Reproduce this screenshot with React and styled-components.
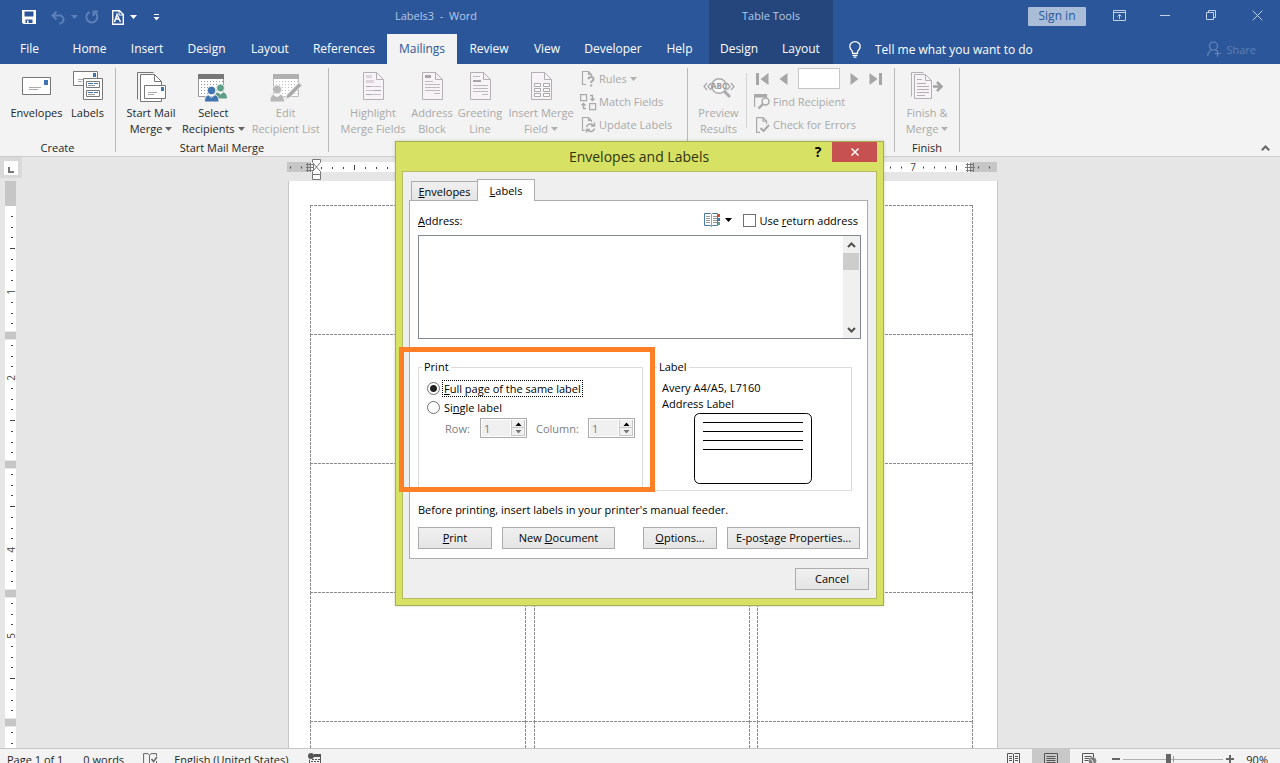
import React from "react";
import styled, { createGlobalStyle, css } from "styled-components";

const GlobalStyle = createGlobalStyle`
  * {
    box-sizing: border-box;
  }
  body {
    margin: 0;
    font-family: "Open Sans", "Noto Sans", sans-serif;
    font-size: 11px;
    color: #262626;
    overflow: hidden;
  }
  button, input, textarea {
    font: inherit;
    color: inherit;
    margin: 0;
  }
  svg {
    display: block;
    flex: none;
    overflow: visible;
  }
`;

/* ---------- icons ---------- */

const Caret = ({ color = "currentColor" }) => (
  <svg width="7" height="4" viewBox="0 0 7 4">
    <path d="M0 0h7L3.500 4z" fill={color} />
  </svg>
);

const SaveIcon = () => (
  <svg width="14" height="14" viewBox="0 0 14 14">
    <path d="M0 0h14v14H1.500L0 12.500z" fill="#fff" />
    <path d="M2.500 1.500h9v5h-9zM3.500 9.500h7V13h-4v-2.500h-1.500V13H3.500z" fill="#2b579a" />
  </svg>
);

const UndoIcon = () => (
  <svg width="14" height="13" viewBox="0 0 14 13" fill="none" stroke="#5d80b9" strokeWidth="2">
    <path d="M5.500.500L1.500 4.500l4 4M1.500 4.500h7a4 4 0 0 1 0 8" />
  </svg>
);

const RedoIcon = () => (
  <svg width="14" height="14" viewBox="0 0 14 14" fill="none" stroke="#5d80b9" strokeWidth="2">
    <path d="M4.500 2A5.500 5.500 0 1 0 10 2.500M8.500 6V1.500H13" />
  </svg>
);

const DocStyleIcon = () => (
  <svg width="12" height="15" viewBox="0 0 12 15" fill="none" stroke="#fff">
    <path d="M.7.700h6.800l3.800 3.800v9.800H.7z" strokeWidth="1.400" />
    <path d="M7 1v4h4" />
    <path d="M2.500 12L5 4.500 8.500 12M3.500 9h4" strokeWidth="1.500" />
  </svg>
);

const MoreIcon = () => (
  <svg width="7" height="7" viewBox="0 0 7 7" fill="#fff">
    <path d="M1 0h5v1H1zM.5 3h6L3.500 6.500z" />
  </svg>
);

const RibbonOptionsIcon = () => (
  <svg width="13" height="11" viewBox="0 0 13 11" fill="none" stroke="#c3d1e6">
    <path d="M.5.500h12v10H.5zM.5 2.500h12M6.500 9V4.500M4.500 6.500l2-2 2 2" />
  </svg>
);

const MinimizeIcon = () => (
  <svg width="10" height="11" viewBox="0 0 10 11" stroke="#c3d1e6">
    <path d="M0 5.500h10" />
  </svg>
);

const RestoreIcon = () => (
  <svg width="11" height="11" viewBox="0 0 11 11" fill="none" stroke="#c3d1e6">
    <path d="M.5 2.500h7v7h-7zM2.500 2.500v-2h7v7h-2" />
  </svg>
);

const CloseIcon = ({ size = 11, color = "#c3d1e6", weight = 1 }) => (
  <svg width={size} height={size} viewBox="0 0 11 11" stroke={color} strokeWidth={weight}>
    <path d="M.7.700l9.600 9.600M10.300.700L.7 10.300" />
  </svg>
);

const BulbIcon = () => (
  <svg width="12" height="17" viewBox="0 0 12 17" fill="none" stroke="#fff" strokeWidth="1.300">
    <path d="M3.500 12.300V10.500C2.500 9 .8 7.800.8 5.400a5.200 4.800 0 0 1 10.400 0C11.200 7.800 9.500 9 8.500 10.500v1.800zM3.500 14.300h5M4.500 16.200h3" />
  </svg>
);

const ShareIcon = () => (
  <svg width="15" height="16" viewBox="0 0 15 16" fill="none" stroke="#6485ba" strokeWidth="1.200">
    <circle cx="6.500" cy="5" r="4" />
    <path d="M.7 15c0-3 1.500-4.800 4-6M8 8.800l2 1M10.500 9.500v6M7.500 12.500h6.500" />
  </svg>
);

const EnvelopeIcon = () => (
  <svg width="30" height="30" viewBox="1 0 30 30">
    <path d="M1.500 5.500h28v17h-28z" fill="#fff" stroke="#777" />
    <path d="M23 8h4v5h-4z" fill="#3f75b0" />
    <path d="M8 15.500h12M8 17.500h9" stroke="#aaa" fill="none" />
  </svg>
);

const LabelsIcon = () => (
  <svg width="30" height="30" viewBox="0 0 30 30">
    <path d="M.5-.500h24v14H.5z" fill="#fff" stroke="#777" />
    <path d="M20 1h3v4h-3z" fill="#3f75b0" />
    <path d="M5 7.500h5M5 9.500h4" stroke="#aaa" />
    <path d="M10.500 6.500h19v21h-19z" fill="#fff" stroke="#777" />
    <path d="M13.500 9.500h13v6h-13zM13.500 18.500h13v6h-13z" fill="#fff" stroke="#777" />
    <path d="M15 11.500h5M21 11.500h4M15 20.500h5M21 20.500h4" stroke="#3f75b0" />
    <path d="M15 13.500h7M15 22.500h7" stroke="#999" />
  </svg>
);

const MailMergeIcon = () => (
  <svg width="30" height="30" viewBox="0 0 30 30">
    <path d="M1.500 27.500V.500h16" fill="none" stroke="#777" />
    <path d="M4.500 2.500h14l7 7v20h-21z" fill="#fff" stroke="#777" />
    <path d="M18.500 2.500v7h7" fill="none" stroke="#777" />
    <path d="M8.500 13.500h21v13h-21z" fill="#fff" stroke="#777" />
    <path d="M25 15h3v4h-3z" fill="#3f75b0" />
    <path d="M12 20.500h9M12 22.500h6" stroke="#aaa" />
  </svg>
);

const dots = [];
for (let y = 8; y < 24; y += 3) {
  for (let x = 3; x < 25; x += 3) dots.push([x, y]);
}

const ListSheet = ({ head, line }) => (
  <>
    <path d="M.5 2.500h25v22H.5z" fill="#fff" stroke={line} />
    <path d="M0 2h26v5H0z" fill={head} />
    {dots.map(([x, y]) => (
      <rect key={`${x}-${y}`} x={x} y={y + 1} width="1" height="1" fill={line} />
    ))}
  </>
);

const SelectRecipientsIcon = () => (
  <svg width="30" height="30" viewBox="0 0 30 30">
    <ListSheet head="#777" line="#999" />
    <g stroke="#f3f3f3" strokeWidth="1">
      <circle cx="22.500" cy="16" r="4" fill="#5f9f88" />
      <path d="M16 27c0-5 2-7 4-7l2.500 2 2.500-2c2 0 4.500 2 4.500 7z" fill="#5f9f88" />
      <circle cx="13.500" cy="18.500" r="4.300" fill="#3f75b0" />
      <path d="M6.500 30c0-5 2-7 4-7l3 2.500 3-2.500c2.500 0 4.500 2 4.500 7z" fill="#3f75b0" />
    </g>
  </svg>
);

const EditRecipientsIcon = () => (
  <svg width="32" height="30" viewBox="-3 0 32 30">
    <ListSheet head="#b0b0b0" line="#bdbdbd" />
    <g stroke="#f3f3f3" strokeWidth="1" fill="#b7b7b7">
      <circle cx="4" cy="17.500" r="4.500" />
      <path d="M-3 30c0-5 1.500-7 3.500-7.500L4 25l3.500-2.500C10 23 11.500 25 11.500 30z" />
      <path d="M12.500 27.500l1.500-5L26 10.500l3 3L17 25.500z" fill="#a9a9a9" />
    </g>
  </svg>
);

const faded = "#b3b0b3";

const DocShape = () => (
  <>
    <path d="M.5.500h13l7 7v20H.5z" fill="#f7f3f7" stroke={faded} />
    <path d="M13.500.500v7h7" fill="none" stroke={faded} />
  </>
);

const HighlightIcon = () => (
  <svg width="21" height="28" viewBox="0 0 21 28">
    <DocShape />
    <path d="M3 3h6v3H3zM3 8h8v3H3z" fill="#dcd6dc" />
    <path d="M3 14.500h15M3 18.500h15M3 22.500h15" stroke="#c9bdc9" />
    <path d="M3 14.500h5M11 18.500h7M3 22.500h5" stroke="#aaa" />
  </svg>
);

const AddressIcon = () => (
  <svg width="21" height="28" viewBox="0 0 21 28">
    <DocShape />
    <path d="M3 3h6v3H3z" fill="#a6a6a6" />
    <path d="M3 9.500h8M3 12.500h15M3 15.500h15M3 18.500h15M12 21.500h6" stroke="#bbb" />
  </svg>
);

const GreetingIcon = () => (
  <svg width="21" height="28" viewBox="0 0 21 28">
    <DocShape />
    <path d="M3 8h8v2H3z" fill="#a6a6a6" />
    <path d="M3 4.500h7M3 13.500h15M3 16.500h15M3 19.500h15M12 22.500h6" stroke="#bbb" />
  </svg>
);

const MergeFieldIcon = () => (
  <svg width="21" height="28" viewBox="0 0 21 28">
    <DocShape />
    <path
      d="M3.500 11.500h6v3h-6zM12.500 11.500h6v3h-6zM3.500 16.500h6v3h-6zM12.500 16.500h6v3h-6zM3.500 21.500h6v3h-6zM12.500 21.500h6v3h-6z"
      fill="#fff"
      stroke="#aaa"
    />
  </svg>
);

const RulesIcon = () => (
  <svg width="16" height="16" viewBox="0 0 16 16" fill="none" stroke="#a9a9a9">
    <path d="M6 13.500H2.500V.500h6l3 3V5M8.500.500v3h3" strokeWidth="1.200" />
    <path d="M8.500 8.200c0-3 5-3 5-.2 0 2-2.500 2-2.500 4" strokeWidth="2" />
    <path d="M10 13.500h2.200v2H10z" fill="#a9a9a9" stroke="none" />
  </svg>
);

const MatchIcon = () => (
  <svg width="16" height="16" viewBox="0 0 16 16" fill="none" stroke="#a9a9a9">
    <path d="M.6.600h6v6h-6zM9.600 9.600h6v6h-6z" strokeWidth="1.200" />
    <path d="M10 1.500h2.500V6M10.500 4.500l2 2 2-2M6 14.500H3.500V10M1.500 11.500l2-2 2 2" strokeWidth="1.400" />
  </svg>
);

const UpdateIcon = () => (
  <svg width="16" height="16" viewBox="0 0 16 16" fill="none" stroke="#a9a9a9">
    <path d="M5 13.500H2.500V.500h6l3 3V5M8.500.500v3h3" strokeWidth="1.200" />
    <path d="M6.500 10a4 4 0 0 1 7-1.500M14.500 5.500v3.500H11M14.500 11.500a4 4 0 0 1-7 1.500M6.500 15.500V12.500H10" strokeWidth="1.500" />
  </svg>
);

const PreviewIcon = () => (
  <svg width="32" height="24" viewBox="0 0 32 24" fill="none" stroke="#ababab">
    <path d="M4 6L1 9.500 4 13M8 6L5 9.500 8 13M24 6l3 3.500-3 3.500M28 6l3 3.500-3 3.500" strokeWidth="1.300" />
    <circle cx="16" cy="9" r="7.300" strokeWidth="1.500" fill="#f8f8f8" />
    <path d="M21 14l6 6" strokeWidth="3" />
    <text x="16" y="12" fontSize="8" fontWeight="700" textAnchor="middle" fill="#999" stroke="none">ABC</text>
  </svg>
);

const FindIcon = () => (
  <svg width="16" height="16" viewBox="0 0 16 16" fill="none" stroke="#a9a9a9">
    <path d="M.6 13V1h12v2" strokeWidth="1.200" />
    <path d="M0 0h13v3.500H0z" fill="#a9a9a9" stroke="none" />
    <circle cx="11.500" cy="7.500" r="3.500" strokeWidth="1.500" fill="#f3f3f3" />
    <path d="M9 10l-4.500 4.500" strokeWidth="2.400" />
  </svg>
);

const CheckIcon = () => (
  <svg width="16" height="16" viewBox="0 0 16 16" fill="none" stroke="#a9a9a9">
    <path d="M6 15.400H2.600V.600h6.500l3.500 3.500V7M9 .600v3.500h3.500" strokeWidth="1.200" />
    <path d="M6.500 11l3 3 5.500-6" strokeWidth="2" />
  </svg>
);

const FinishIcon = () => (
  <svg width="32" height="28" viewBox="0 0 32 28">
    <path d="M.5 24.500V.500h12" fill="none" stroke={faded} />
    <g transform="translate(3 2)">
      <path d="M.5.500h11l6 6v18H.5z" fill="#f7f3f7" stroke={faded} />
      <path d="M11.500.500v6h6M3 5.500h5M3 9.500h9M3 12.500h12M3 15.500h12M3 18.500h12M3 21.500h8" fill="none" stroke={faded} />
    </g>
    <path d="M22 14.500h8M26 10l4.500 4.500L26 19" fill="none" stroke="#a3a3a3" strokeWidth="2.500" />
  </svg>
);

const NavIcon = ({ bar, flip }) => (
  <svg width={bar ? 13 : 9} height="12" viewBox={bar ? "0 0 13 12" : "4 0 9 12"} fill="#a6a6a6">
    <g transform={flip ? (bar ? "translate(13 0) scale(-1 1)" : "translate(17 0) scale(-1 1)") : undefined}>
      {bar && <path d="M0 0h3v12H0z" />}
      <path d="M12.500 0v12L4.500 6z" />
    </g>
  </svg>
);

const CollapseIcon = () => (
  <svg width="9" height="6" viewBox="0 0 9 6" fill="none" stroke="#666" strokeWidth="2">
    <path d="M.8 5.200l3.700-3.700 3.700 3.700" />
  </svg>
);

const ProofIcon = () => (
  <svg width="15" height="13" viewBox="0 0 15 13" fill="none" stroke="#666">
    <path d="M6.500 12V2.500L5 .600H.6v10H5l1.500 1.500L8 10.600M6.500 2.500L8 .600h5.500V3M13.500 8v2.600H11" />
    <path d="M8.500 6l2 2.500L14 4" strokeWidth="1.500" />
  </svg>
);

const MacroIcon = () => (
  <svg width="14" height="12" viewBox="0 0 14 12">
    <path d="M6 1h7v3H6z" fill="#555" />
    <path d="M1.500 6.500v5h11V4" fill="none" stroke="#555" />
    <path d="M4 6.500h8M3 8.500h9M3 10.500h9" stroke="#555" strokeDasharray="2 1" />
    <circle cx="3" cy="3" r="3" fill="#555" />
  </svg>
);

const ReadIcon = () => (
  <svg width="13" height="12" viewBox="0 0 13 12" fill="none" stroke="#555">
    <path d="M.5.500h5l1 1 1-1h5v10h-5l-1 1-1-1h-5zM6.500 1v10M2 3.500h3M2 5.500h3M2 7.500h3M8 3.500h3M8 5.500h3M8 7.500h3" />
  </svg>
);

const PrintLayoutIcon = () => (
  <svg width="14" height="12" viewBox="0 0 14 12" fill="none" stroke="#555">
    <path d="M.5.500h13v11H.5zM2.500 3.500h9M2.500 5.500h9M2.500 7.500h9M2.500 9.500h9" />
  </svg>
);

const WebIcon = () => (
  <svg width="15" height="12" viewBox="0 0 15 12" fill="none" stroke="#555">
    <path d="M6 11.500H.5V.500h11V4M2.500 3.500h7M2.500 5.500h5M2.500 7.500h4" />
    <circle cx="10.500" cy="8" r="3.500" fill="#777" stroke="#888" />
    <path d="M8.500 6.500l2 1 .5 2.500" stroke="#f3f3f3" />
  </svg>
);

const BookIcon = () => (
  <svg width="16" height="14" viewBox="0 0 16 14">
    <path d="M.5.500h6l1 1 1-1h5v12h-5l-1 1-1-1h-6z" fill="#fff" stroke="#4a7a9f" />
    <path d="M7.500 1v12" stroke="#8aa6bd" />
    <path d="M2 3.500h4M2 5.500h4M2 7.500h4M2 9.500h4M9 3.500h4M9 5.500h4M9 7.500h4M9 9.500h4" stroke="#999" />
    <path d="M14 1h2v3h-2z" fill="#d0502f" />
    <path d="M14 5h2v3h-2z" fill="#3f75b0" />
    <path d="M14 9h2v3h-2z" fill="#5f9f88" />
  </svg>
);

const ScrollArrow = ({ down }) => (
  <svg width="9" height="6" viewBox="0 0 9 6" fill="none" stroke="#505050" strokeWidth="2">
    <path d={down ? "M1 1l3.500 3.500L8 1" : "M1 5l3.500-3.500L8 5"} />
  </svg>
);

const SpinArrow = ({ down, color }) => (
  <svg width="7" height="4" viewBox="0 0 7 4" fill={color}>
    <path d={down ? "M.5 0h6L3.500 3.500z" : "M.5 4h6L3.500.500z"} />
  </svg>
);

const LabelPreview = () => (
  <svg width="118" height="71" viewBox="0 0 118 71" fill="none" stroke="#000">
    <rect x=".5" y=".5" width="117" height="70" rx="5" />
    <path d="M9 9.500h100M9 18.500h100M9 27.500h100M9 36.500h100" />
  </svg>
);

/* ---------- rulers ---------- */

const ticksFrom = (zero, count, step) =>
  Array.from({ length: count }, (_, i) => ({ at: zero + (i + 1) * step, index: i + 1 }));

const HorizontalRuler = () => (
  <svg width="710" height="21" viewBox="0 0 710 21">
    <path d="M0 5h710v10H0z" fill="#fff" />
    <path d="M0 5h24v10H0zM683 5h27v10h-27z" fill="#c6c6c6" />
    <path d="M3.500 9.500v2M14.500 9.500v2M691.500 9.500v2M702.500 9.500v2" stroke="#444" />
    {ticksFrom(24, 11, 11).map(({ at, index }) => (
      <rect key={at} x={Math.round(at) - 1} y={index % 4 ? 10 : 8} width="1" height={index % 4 ? 2 : 5} fill="#444" />
    ))}
    <path d="M603.500 9.500v2M614.500 9.500v2M636.500 9.500v2M647.500 9.500v2M658.500 9.500v2M669.500 8.500v5" stroke="#444" />
    <text x="626" y="14" fontSize="10" textAnchor="middle" fill="#444">7</text>
    <path d="M19 7.500h8M19 10.500h8M19 13.500h8M20.500 6v9M23.500 6v9M26.500 6v9" stroke="#777" />
    <path d="M679 7.500h8M678 10.500h10M679 13.500h8M680.500 6v9M683.500 6v9M686.500 6v9" stroke="#777" />
    <path d="M25.500 2.500h8v3l-4 4.500-4-4.500zM25.500 17.500v-3l4-4.500 4 4.500v3zM25.500 17.500h8v5h-8z" fill="#fff" stroke="#777" />
  </svg>
);

const VerticalRuler = () => (
  <svg width="11" height="582" viewBox="0 0 11 582">
    <path d="M0 0h11v582H0z" fill="#fff" />
    <path d="M0 0h11v25H0z" fill="#c6c6c6" />
    {ticksFrom(24, 50, 10.75).map(({ at, index }) => {
      const y = Math.round(at);
      if (index % 12 === 0) return null;
      if (index % 8 === 0) {
        return (
          <text key={y} transform={`translate(10 ${y + 1}) rotate(-90)`} fontSize="10" textAnchor="middle" fill="#444">
            {index / 8}
          </text>
        );
      }
      const half = index % 4 === 0;
      return <rect key={y} x={half ? 5 : 6} y={y} width={half ? 5 : 2} height="1" fill="#444" />;
    })}
    {[151, 280, 409, 538].map((y) => (
      <g key={y}>
        <path d={`M0 ${y - 1}h11v9H0z`} fill="#e6e6e6" />
        <path d={`M0 ${y}h11v7H0z`} fill="#c6c6c6" />
      </g>
    ))}
  </svg>
);

/* ---------- shell ---------- */

const Shell = styled.div`
  position: relative;
  display: flex;
  flex-direction: column;
  height: 100vh;
  overflow: hidden;
  background: #e6e6e6;
`;

const Header = styled.header`
  background: #2b579a;
  color: #fff;
`;

const HeaderRow = styled.div`
  display: flex;
  height: ${({ $height }) => $height}px;
`;

const HeaderMain = styled.div`
  flex: 0 0 709px;
  display: flex;
  align-items: stretch;
`;

const Contextual = styled.div`
  flex: 0 0 124px;
  display: flex;
  justify-content: center;
  background: #24467c;
`;

const HeaderEnd = styled.div`
  flex: 1;
  display: flex;
  align-items: center;
`;

const QuickAccess = styled.div`
  display: flex;
  padding-left: 15px;
`;

const QuickButton = styled.button`
  display: flex;
  align-items: center;
  justify-content: center;
  gap: 6px;
  width: ${({ $width }) => $width}px;
  padding: 0;
  border: 0;
  background: none;
`;

const TitleText = styled.span`
  flex: 1;
  text-align: center;
  line-height: 32px;
  white-space: pre;
  color: #b4c9e8;
`;

const SignIn = styled.button`
  width: 58px;
  height: 19px;
  margin: 0 10px 2px auto;
  padding: 0;
  border: 0;
  border-radius: 1px;
  background: #a9bcd8;
  color: #2b579a;
  font-size: 12px;
  line-height: 18px;
`;

const WindowButton = styled.button`
  display: flex;
  align-items: center;
  justify-content: center;
  width: 46px;
  height: 30px;
  margin-bottom: 4px;
  padding: 0;
  border: 0;
  background: none;
`;

const Tab = styled.button`
  width: ${({ $width }) => $width}px;
  height: 30px;
  padding: 0;
  border: 0;
  background: ${({ $active }) => ($active ? "#f3f3f3" : "none")};
  color: ${({ $active }) => ($active ? "#2b579a" : "#fff")};
  font-size: 12px;
  line-height: 30px;
  text-align: center;
`;

const TellMe = styled.label`
  display: flex;
  align-items: center;
  gap: 14px;
  padding-left: 16px;
  font-size: 12px;
  input {
    width: 220px;
    padding: 0;
    border: 0;
    background: none;
    outline: none;
  }
  input::placeholder {
    color: #fff;
    opacity: 1;
  }
`;

const Share = styled.button`
  display: flex;
  align-items: center;
  gap: 4px;
  margin-left: auto;
  padding: 0 24px 0 0;
  border: 0;
  background: none;
  color: #5d7fb6;
`;

/* ---------- ribbon ---------- */

const RibbonBar = styled.div`
  position: relative;
  display: flex;
  height: 93px;
  background: #f3f3f3;
  border-bottom: 1px solid #cdcdcd;
`;

const Group = styled.section`
  display: flex;
  flex-direction: column;
  flex: 0 0 ${({ $width }) => $width}px;
  padding-top: 3px;
`;

const GroupBody = styled.div`
  display: flex;
  justify-content: ${({ $start }) => ($start ? "flex-start" : "center")};
  padding-left: ${({ $indent }) => $indent || 0}px;
`;

const GroupName = styled.div`
  margin-top: auto;
  line-height: 16px;
  text-align: center;
`;

const Separator = styled.div`
  flex: 0 0 1px;
  height: ${({ $short }) => ($short ? 55 : 84)}px;
  margin-top: ${({ $short }) => ($short ? 6 : 4)}px;
  background: ${({ $short }) => ($short ? "#d4d4d4" : "#b9b9b9")};
`;

const BigButton = styled.button`
  display: flex;
  flex-direction: column;
  align-items: center;
  flex: 0 0 ${({ $width }) => $width}px;
  padding: 5px 0 0;
  border: 0;
  background: none;
  white-space: nowrap;
  color: ${({ disabled }) => (disabled ? "#a9a9a9" : "inherit")};
`;

const IconSlot = styled.span`
  display: flex;
  align-items: ${({ $middle }) => ($middle ? "center" : "flex-start")};
  height: 33px;
`;

const Line = styled.span`
  display: flex;
  align-items: center;
  gap: 3px;
  line-height: 16px;
`;

const Stack = styled.div`
  display: flex;
  flex-direction: column;
  padding-left: ${({ $indent }) => $indent}px;
`;

const SmallButton = styled.button`
  display: flex;
  align-items: center;
  gap: 3px;
  height: 23px;
  padding: 0;
  border: 0;
  background: none;
  white-space: nowrap;
  color: #a9a9a9;
`;

const RecordNav = styled.div`
  display: flex;
  align-items: center;
  gap: 10px;
  height: 23px;
  padding-left: 2px;
  button {
    display: flex;
    padding: 0;
    border: 0;
    background: none;
  }
  input {
    width: 42px;
    height: 21px;
    border: 1px solid #c6c6c6;
    background: #fff;
  }
`;

const Collapse = styled.button`
  align-self: flex-end;
  margin: 0 10px 5px auto;
  padding: 0;
  border: 0;
  background: none;
`;

const Big = ({ icon, lines, width, caret, middle, disabled }) => (
  <BigButton $width={width} disabled={disabled}>
    <IconSlot $middle={middle}>{icon}</IconSlot>
    {lines.map((line, i) => (
      <Line key={line}>
        {line}
        {caret && i === lines.length - 1 && <Caret color={disabled ? "#b0b0b0" : "#666"} />}
      </Line>
    ))}
  </BigButton>
);

const Ribbon = () => (
  <RibbonBar>
    <Group $width={115}>
      <GroupBody>
        <Big icon={<EnvelopeIcon />} lines={["Envelopes"]} width={60} />
        <Big icon={<LabelsIcon />} lines={["Labels"]} width={42} />
      </GroupBody>
      <GroupName>Create</GroupName>
    </Group>
    <Separator />
    <Group $width={212}>
      <GroupBody $start $indent={4}>
        <Big icon={<MailMergeIcon />} lines={["Start Mail", "Merge"]} width={62} caret />
        <Big icon={<SelectRecipientsIcon />} lines={["Select", "Recipients"]} width={60} caret />
        <Big icon={<EditRecipientsIcon />} lines={["Edit", "Recipient List"]} width={82} disabled />
      </GroupBody>
      <GroupName>Start Mail Merge</GroupName>
    </Group>
    <Separator />
    <Group $width={358}>
      <GroupBody $start $indent={8}>
        <Big icon={<HighlightIcon />} lines={["Highlight", "Merge Fields"]} width={72} disabled />
        <Big icon={<AddressIcon />} lines={["Address", "Block"]} width={46} disabled />
        <Big icon={<GreetingIcon />} lines={["Greeting", "Line"]} width={50} disabled />
        <Big icon={<MergeFieldIcon />} lines={["Insert Merge", "Field"]} width={72} caret disabled />
        <Stack $indent={3}>
          <SmallButton disabled>
            <RulesIcon />
            Rules
            <Caret color="#b0b0b0" />
          </SmallButton>
          <SmallButton disabled>
            <MatchIcon />
            Match Fields
          </SmallButton>
          <SmallButton disabled>
            <UpdateIcon />
            Update Labels
          </SmallButton>
        </Stack>
      </GroupBody>
    </Group>
    <Separator />
    <Group $width={206}>
      <GroupBody $start $indent={3}>
        <Big icon={<PreviewIcon />} lines={["Preview", "Results"]} width={55} middle disabled />
        <Separator $short />
        <Stack $indent={7}>
          <RecordNav>
            <button aria-label="First record" disabled><NavIcon bar /></button>
            <button aria-label="Previous record" disabled><NavIcon /></button>
            <input type="text" aria-label="Record" disabled />
            <button aria-label="Next record" disabled><NavIcon flip /></button>
            <button aria-label="Last record" disabled><NavIcon bar flip /></button>
          </RecordNav>
          <SmallButton disabled>
            <FindIcon />
            Find Recipient
          </SmallButton>
          <SmallButton disabled>
            <CheckIcon />
            Check for Errors
          </SmallButton>
        </Stack>
      </GroupBody>
    </Group>
    <Separator />
    <Group $width={64}>
      <GroupBody>
        <Big icon={<FinishIcon />} lines={["Finish &", "Merge"]} width={60} caret disabled />
      </GroupBody>
      <GroupName>Finish</GroupName>
    </Group>
    <Separator />
    <Collapse aria-label="Collapse the ribbon"><CollapseIcon /></Collapse>
  </RibbonBar>
);

/* ---------- document ---------- */

const Workspace = styled.main`
  flex: 1;
  min-height: 0;
  display: grid;
  grid-template-columns: 22px 1fr;
  grid-template-rows: 24px 1fr;
  overflow: hidden;
`;

const Corner = styled.div`
  display: flex;
  justify-content: center;
  align-items: center;
  height: 21px;
  background: #d9d9d9;
`;

const TabStop = styled.button`
  width: 14px;
  height: 14px;
  padding: 4px 0 0 4px;
  border: 0;
  background: #fff;
  &::before {
    content: "";
    display: block;
    width: 4px;
    height: 4px;
    border: solid #777;
    border-width: 0 0 2px 2px;
  }
`;

const RulerTop = styled.div`
  display: flex;
  justify-content: center;
  padding-right: 18px;
`;

const RulerSide = styled.div`
  padding-left: 5px;
  overflow: hidden;
`;

const Canvas = styled.div`
  display: flex;
  justify-content: center;
  padding-right: 16px;
  overflow: hidden;
`;

const Sheet = styled.div`
  width: 710px;
  height: 760px;
  padding: 24px 24px 0 21px;
  border: solid #c6c6c6;
  border-width: 0 1px;
  background: #fff;
`;

const LabelGrid = styled.div`
  display: grid;
  grid-template-columns: 215fr 9fr 215fr 8fr 215fr 1px;
  grid-auto-rows: 129px;
`;

const dashes = (angle) => `repeating-linear-gradient(${angle}, #8c8c8c 0 3px, transparent 3px 4px)`;

const LabelCell = styled.div`
  background: ${dashes("90deg")} 0 0 / 100% 1px no-repeat, ${dashes("180deg")} 0 0 / 1px 100% no-repeat;
`;

/* ---------- status bar ---------- */

const StatusBar = styled.footer`
  flex: 0 0 15px;
  display: flex;
  align-items: flex-start;
  overflow: hidden;
  background: #f3f3f3;
  border-top: 1px solid #c6c6c6;
`;

const StatusItem = styled.span`
  display: flex;
  align-items: center;
  justify-content: center;
  height: 20px;
  padding: 0 ${({ $pad = 10 }) => $pad}px;
  white-space: nowrap;
`;

const ViewButton = styled.button`
  display: flex;
  align-items: center;
  justify-content: center;
  width: 38px;
  height: 20px;
  padding: 0;
  border: 0;
  background: ${({ $active }) => ($active ? "#c8c8c8" : "none")};
`;

const Zoom = styled.div`
  display: flex;
  align-items: center;
  gap: 3px;
  height: 20px;
  margin-left: 4px;
  button {
    width: 8px;
    height: 8px;
    padding: 0;
    border: 0;
    background: linear-gradient(#666, #666) center / 8px 2px no-repeat;
  }
  button:last-of-type {
    background: linear-gradient(#666, #666) center / 8px 2px no-repeat,
      linear-gradient(#666, #666) center / 2px 8px no-repeat;
  }
  input {
    width: 100px;
    height: 16px;
    appearance: none;
    background: linear-gradient(#999, #999) center / 1px 6px no-repeat,
      linear-gradient(#b0b0b0, #b0b0b0) center / 100% 1px no-repeat;
  }
  input::-webkit-slider-thumb {
    appearance: none;
    width: 5px;
    height: 11px;
    background: #666;
  }
`;

const Spacer = styled.div`
  flex: 1;
`;

/* ---------- dialog ---------- */

const Overlay = styled.div`
  position: absolute;
  inset: 0;
  display: flex;
  justify-content: center;
  align-items: flex-start;
  padding: 141px 1px 0 0;
`;

const Dialog = styled.div`
  width: 489px;
  padding: 0 6px 6px;
  border: 1px solid #a5ae55;
  background: #d7e265;
  color: #000;
  box-shadow: 0 0 3px rgba(120, 130, 40, 0.3);
`;

const DialogTitle = styled.div`
  display: flex;
  align-items: flex-start;
  height: 29px;
  h1 {
    flex: 1;
    margin: 0;
    padding-left: 72px;
    font-size: 14px;
    font-weight: 400;
    line-height: 30px;
    text-align: center;
    color: #2f3310;
  }
`;

const HelpButton = styled.button`
  width: 28px;
  height: 20px;
  padding: 0;
  border: 0;
  background: none;
  font-size: 14px;
  font-weight: 700;
  line-height: 20px;
`;

const CloseButton = styled.button`
  display: flex;
  align-items: center;
  justify-content: center;
  width: 45px;
  height: 20px;
  padding: 0;
  border: 0;
  background: #c75050;
`;

const Client = styled.div`
  height: 428px;
  padding: 7px 7px 0 6px;
  border: 1px solid #b3bc5c;
  background: #efefef;
`;

const DialogTabs = styled.div`
  display: flex;
  align-items: flex-end;
  height: 21px;
  padding-left: 2px;
`;

const DialogTab = styled.button`
  position: relative;
  z-index: 1;
  width: ${({ $active }) => ($active ? 58 : 66)}px;
  height: ${({ $active }) => ($active ? 22 : 19)}px;
  margin-bottom: ${({ $active }) => ($active ? -1 : 0)}px;
  padding: 0;
  border: 1px solid #acacac;
  border-bottom: 0;
  background: ${({ $active }) => ($active ? "#fff" : "linear-gradient(#f0f0f0, #e5e5e5)")};
  ${({ $active }) => !$active && "border-right: 0;"}
`;

const Panel = styled.div`
  height: 359px;
  margin-right: 1px;
  padding: 8px 6px 0 8px;
  border: 1px solid #acacac;
  background: #fff;
`;

const AddressRow = styled.div`
  display: flex;
  align-items: center;
  height: 22px;
  margin-bottom: 4px;
  padding-right: 3px;
`;

const BookButton = styled.button`
  display: flex;
  align-items: center;
  gap: 5px;
  margin: 0 11px 0 auto;
  padding: 0;
  border: 0;
  background: none;
`;

const CheckLabel = styled.label`
  display: flex;
  align-items: center;
  gap: 4px;
  input {
    appearance: none;
    width: 13px;
    height: 13px;
    border: 1px solid #707070;
    background: #fff;
  }
`;

const AddressBox = styled.div`
  display: flex;
  height: 104px;
  border: 1px solid #828790;
  textarea {
    flex: 1;
    border: 0;
    outline: none;
    resize: none;
    overflow: hidden;
    background: #fff;
  }
`;

const Scrollbar = styled.div`
  display: flex;
  flex-direction: column;
  flex: 0 0 17px;
  justify-content: space-between;
  background: #f0f0f0;
  button {
    display: flex;
    align-items: center;
    justify-content: center;
    height: 17px;
    padding: 0;
    border: 0;
    background: none;
  }
`;

const Thumb = styled.div`
  height: 17px;
  margin: 0 1px auto 0;
  background: #cdcdcd;
`;

const Groups = styled.div`
  display: flex;
  gap: 8px;
  margin-top: 20px;
`;

const Marked = styled.div`
  position: relative;
  z-index: 1;
`;

const Highlight = styled.div`
  position: absolute;
  inset: -12px -12px -1px -19px;
  border: 5px solid #ff7f27;
  pointer-events: none;
`;

const GroupBox = styled.fieldset`
  width: ${({ $width }) => $width}px;
  height: 132px;
  min-width: 0;
  margin: 0;
  padding: 4px 0 0 ${({ $indent }) => $indent}px;
  border: 1px solid #dcdcdc;
  legend {
    height: 16px;
    margin-left: -5px;
    padding: 0 2px;
    line-height: 16px;
  }
`;

const Radio = styled.label`
  display: flex;
  align-items: center;
  gap: 2px;
  height: 19px;
  input {
    appearance: none;
    width: 13px;
    height: 13px;
    border: 1px solid #707070;
    border-radius: 50%;
    background: #fff;
  }
  input:checked {
    background: radial-gradient(circle, #222 0 3px, #fff 4px);
  }
  span {
    padding: 0 1px;
    line-height: 15px;
    border: 1px dotted ${({ $focus }) => ($focus ? "#000" : "transparent")};
  }
`;

const SpinRow = styled.div`
  display: flex;
  align-items: center;
  height: 20px;
  margin-top: 1px;
  padding-left: 18px;
  color: #7d7d7d;
  label {
    width: 35px;
  }
  label:nth-of-type(2) {
    width: 52px;
    margin-left: 9px;
  }
`;

const SpinBox = styled.div`
  display: flex;
  width: 47px;
  height: 20px;
  padding: 1px;
  border: 1px solid #acacac;
  input {
    width: 28px;
    padding: 0 2px;
    border: 0;
    background: #f0f0f0;
    color: #7d7d7d;
  }
`;

const SpinButtons = styled.div`
  flex: 1;
  display: flex;
  flex-direction: column;
  margin-left: 1px;
  button {
    display: flex;
    flex: 1;
    align-items: center;
    justify-content: center;
    padding: 0;
    border: 1px solid #c8c8c8;
    border-top: 0;
    background: #f0f0f0;
  }
`;

const LabelInfo = styled.div`
  padding-top: 1px;
  line-height: 16px;
  svg {
    margin: 1px 0 0 32px;
  }
`;

const Note = styled.p`
  margin: 11px 0 9px;
  line-height: 16px;
`;

const ButtonRow = styled.div`
  display: flex;
  gap: 10px;
  padding-right: 1px;
  ${({ $end }) =>
    $end &&
    css`
      justify-content: flex-end;
      padding: 0;
      margin-top: 9px;
    `}
`;

const DialogButton = styled.button`
  width: ${({ $width = 74 }) => $width}px;
  height: 22px;
  padding: 0;
  border: 1px solid #acacac;
  background: linear-gradient(#f0f0f0, #e5e5e5);
  line-height: 20px;
  white-space: nowrap;
  ${({ $push }) => $push && "margin-left: auto;"}
`;

const Spinner = ({ id }) => (
  <SpinBox>
    <input id={id} type="text" defaultValue="1" disabled />
    <SpinButtons>
      <button aria-label="Increase" disabled><SpinArrow color="#000" /></button>
      <button aria-label="Decrease" disabled><SpinArrow down color="#777" /></button>
    </SpinButtons>
  </SpinBox>
);

const LabelsDialog = () => (
  <Overlay>
    <Dialog role="dialog" aria-labelledby="dialog-title">
      <DialogTitle>
        <h1 id="dialog-title">Envelopes and Labels</h1>
        <HelpButton>?</HelpButton>
        <CloseButton aria-label="Close"><CloseIcon size={8} color="#fff" weight={2} /></CloseButton>
      </DialogTitle>
      <Client>
        <DialogTabs>
          <DialogTab><u>E</u>nvelopes</DialogTab>
          <DialogTab $active><u>L</u>abels</DialogTab>
        </DialogTabs>
        <Panel>
          <AddressRow>
            <label htmlFor="address"><u>A</u>ddress:</label>
            <BookButton aria-label="Address book">
              <BookIcon />
              <Caret color="#000" />
            </BookButton>
            <CheckLabel>
              <input type="checkbox" />
              <span>Use <u>r</u>eturn address</span>
            </CheckLabel>
          </AddressRow>
          <AddressBox>
            <textarea id="address" />
            <Scrollbar>
              <button aria-label="Scroll up"><ScrollArrow /></button>
              <Thumb />
              <button aria-label="Scroll down"><ScrollArrow down /></button>
            </Scrollbar>
          </AddressBox>
          <Groups>
            <Marked>
              <GroupBox $width={225} $indent={8}>
                <legend>Print</legend>
                <Radio $focus>
                  <input type="radio" name="scope" defaultChecked />
                  <span><u>F</u>ull page of the same label</span>
                </Radio>
                <Radio>
                  <input type="radio" name="scope" />
                  <span>Si<u>n</u>gle label</span>
                </Radio>
                <SpinRow>
                  <label htmlFor="row">Row:</label>
                  <Spinner id="row" />
                  <label htmlFor="column">Column:</label>
                  <Spinner id="column" />
                </SpinRow>
              </GroupBox>
              <Highlight />
            </Marked>
            <GroupBox $width={201} $indent={10}>
              <legend>Label</legend>
              <LabelInfo>
                <div>Avery A4/A5, L7160</div>
                <div>Address Label</div>
                <LabelPreview />
              </LabelInfo>
            </GroupBox>
          </Groups>
          <Note>Before printing, insert labels in your printer's manual feeder.</Note>
          <ButtonRow>
            <DialogButton><u>P</u>rint</DialogButton>
            <DialogButton $width={113}>New <u>D</u>ocument</DialogButton>
            <DialogButton $push><u>O</u>ptions...</DialogButton>
            <DialogButton $width={133}>E-pos<u>t</u>age Properties...</DialogButton>
          </ButtonRow>
        </Panel>
        <ButtonRow $end>
          <DialogButton>Cancel</DialogButton>
        </ButtonRow>
      </Client>
    </Dialog>
  </Overlay>
);

const mainTabs = [
  ["File", 59],
  ["Home", 61],
  ["Insert", 54],
  ["Design", 65],
  ["Layout", 62],
  ["References", 86],
  ["Mailings", 70],
  ["Review", 64],
  ["View", 52],
  ["Developer", 80],
  ["Help", 53],
];

const App = () => {
  return (
    <Shell>
      <GlobalStyle />
      <Header>
        <HeaderRow $height={34}>
          <HeaderMain>
            <QuickAccess>
              <QuickButton $width={28} aria-label="Save"><SaveIcon /></QuickButton>
              <QuickButton $width={42} aria-label="Undo"><UndoIcon /><Caret color="#5d80b9" /></QuickButton>
              <QuickButton $width={14} aria-label="Redo"><RedoIcon /></QuickButton>
              <QuickButton $width={50} aria-label="Styles"><DocStyleIcon /><Caret color="#fff" /></QuickButton>
              <QuickButton $width={14} aria-label="Customize"><MoreIcon /></QuickButton>
            </QuickAccess>
            <TitleText>Labels3  -  Word</TitleText>
          </HeaderMain>
          <Contextual>
            <TitleText>Table Tools</TitleText>
          </Contextual>
          <HeaderEnd>
            <SignIn>Sign in</SignIn>
            <WindowButton aria-label="Ribbon display options"><RibbonOptionsIcon /></WindowButton>
            <WindowButton aria-label="Minimize"><MinimizeIcon /></WindowButton>
            <WindowButton aria-label="Restore"><RestoreIcon /></WindowButton>
            <WindowButton aria-label="Close window"><CloseIcon /></WindowButton>
          </HeaderEnd>
        </HeaderRow>
        <HeaderRow $height={30}>
          <HeaderMain>
            {mainTabs.map(([name, width]) => (
              <Tab key={name} $width={width} $active={name === "Mailings"}>{name}</Tab>
            ))}
          </HeaderMain>
          <Contextual>
            <Tab $width={60}>Design</Tab>
            <Tab $width={64}>Layout</Tab>
          </Contextual>
          <HeaderEnd>
            <TellMe>
              <BulbIcon />
              <input type="text" aria-label="Tell me" placeholder="Tell me what you want to do" />
            </TellMe>
            <Share disabled><ShareIcon />Share</Share>
          </HeaderEnd>
        </HeaderRow>
      </Header>
      <Ribbon />
      <Workspace>
        <Corner><TabStop aria-label="Tab stop" /></Corner>
        <RulerTop><HorizontalRuler /></RulerTop>
        <RulerSide><VerticalRuler /></RulerSide>
        <Canvas>
          <Sheet>
            <LabelGrid>
              {Array.from({ length: 30 }, (_, i) => (
                <LabelCell key={i} />
              ))}
            </LabelGrid>
          </Sheet>
        </Canvas>
      </Workspace>
      <StatusBar>
        <StatusItem $pad={7}>Page 1 of 1</StatusItem>
        <StatusItem $pad={13}>0 words</StatusItem>
        <StatusItem $pad={6}><ProofIcon /></StatusItem>
        <StatusItem>English (United States)</StatusItem>
        <StatusItem><MacroIcon /></StatusItem>
        <Spacer />
        <ViewButton aria-label="Read mode"><ReadIcon /></ViewButton>
        <ViewButton $active aria-label="Print layout"><PrintLayoutIcon /></ViewButton>
        <ViewButton aria-label="Web layout"><WebIcon /></ViewButton>
        <Zoom>
          <button aria-label="Zoom out" />
          <input type="range" aria-label="Zoom" min="0" max="100" defaultValue="45" />
          <button aria-label="Zoom in" />
        </Zoom>
        <StatusItem $pad={12}>90%</StatusItem>
      </StatusBar>
      <LabelsDialog />
    </Shell>
  );
};

export default App;
